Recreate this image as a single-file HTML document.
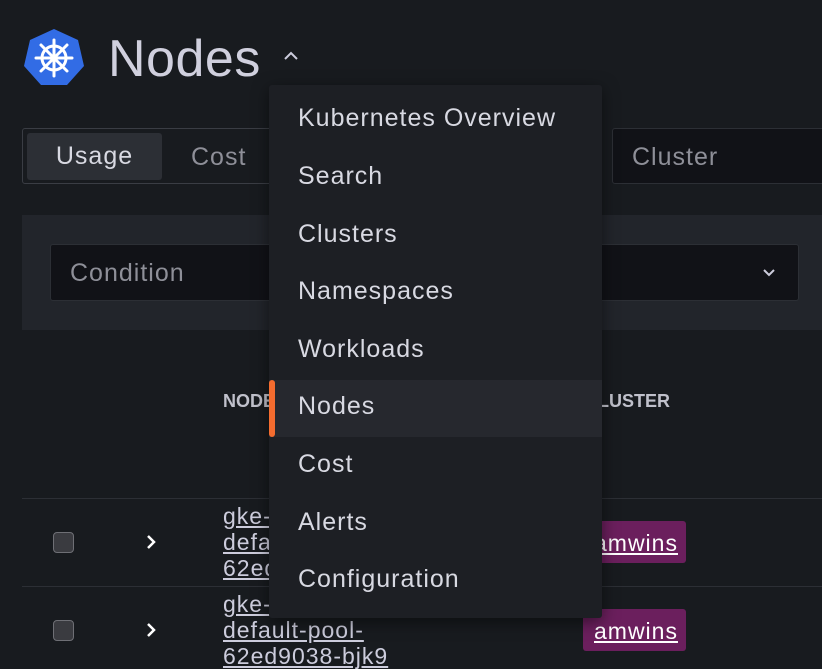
<!DOCTYPE html>
<html><head><style>
*{margin:0;padding:0;box-sizing:border-box}
body{width:822px;height:656px;overflow:hidden;background:#181b1f;font-family:"Liberation Sans",sans-serif;color:#ccccdc;position:relative}
.a{position:absolute}
.menu div.i{position:absolute;left:29px;font-size:25px;letter-spacing:1px;color:#d8d9e2;line-height:1}
.cell{font-size:23px;letter-spacing:1px;color:#ccccdc;text-decoration:underline;line-height:26px;white-space:nowrap}
</style></head><body>
<svg class="a" style="left:23px;top:28px" width="62" height="58" viewBox="0 0 62 58">
<polygon points="31,1 55,12 61,38 44,57 18,57 1,38 7,12" fill="#326ce5"/>
<g stroke="#fff" stroke-width="3" fill="none" stroke-linecap="round">
<circle cx="31" cy="30" r="12"/>
<line x1="31" y1="12" x2="31" y2="48"/><line x1="13" y1="30" x2="49" y2="30"/>
<line x1="18" y1="17" x2="44" y2="43"/><line x1="44" y1="17" x2="18" y2="43"/>
</g><circle cx="31" cy="30" r="3" fill="#fff"/></svg>
<div class="a" style="left:108px;top:29px;font-size:52px;letter-spacing:0.5px;color:#d0d0de">Nodes</div>
<svg class="a" style="left:283px;top:50px" width="16" height="12"><path d="M2 9 L8 3 L14 9" stroke="#ccccdc" stroke-width="2" fill="none"/></svg>
<div class="a" style="left:22px;top:128px;width:270px;height:56px;border:1px solid #3a3d44;border-radius:3px"></div>
<div class="a" style="left:27px;top:133px;width:135px;height:47px;background:#2c2f35;border-radius:3px;font-size:25px;letter-spacing:1px;color:#d8d9e2;text-align:center;line-height:47px">Usage</div>
<div class="a" style="left:191px;top:143px;font-size:25px;letter-spacing:1px;color:#8e8f98">Cost</div>
<div class="a" style="left:612px;top:128px;width:215px;height:56px;background:#111217;border:1px solid #2c2f35;border-radius:3px;font-size:25px;letter-spacing:1px;color:#8e8f98;padding:14px 19px">Cluster</div>
<div class="a" style="left:22px;top:215px;width:800px;height:115px;background:#22252b"></div>
<div class="a" style="left:50px;top:244px;width:749px;height:57px;background:#111217;border:1px solid #2c2f35;border-radius:3px;font-size:25px;letter-spacing:1px;color:#8e8f98;padding:14px 19px">Condition</div>
<svg class="a" style="left:762px;top:267px" width="14" height="12"><path d="M2 3 L7 8 L12 3" stroke="#ccccdc" stroke-width="2" fill="none"/></svg>
<div class="a" style="left:223px;top:391px;font-size:18px;font-weight:bold;color:#c0c1cb">NODE</div>
<div class="a" style="left:585px;top:391px;font-size:18px;font-weight:bold;color:#c0c1cb">CLUSTER</div>
<div class="a" style="left:22px;top:498px;width:800px;height:1px;background:#2c2f35"></div>
<div class="a" style="left:22px;top:586px;width:800px;height:1px;background:#2c2f35"></div>
<div class="a" style="left:53px;top:532px;width:21px;height:21px;background:#3a3b40;border:1px solid #6e6f75;border-radius:4px"></div>
<div class="a" style="left:53px;top:620px;width:21px;height:21px;background:#3a3b40;border:1px solid #6e6f75;border-radius:4px"></div>
<svg class="a" style="left:144px;top:534px" width="14" height="16"><path d="M4 2 L10 8 L4 14" stroke="#fff" stroke-width="2.5" fill="none"/></svg>
<svg class="a" style="left:144px;top:622px" width="14" height="16"><path d="M4 2 L10 8 L4 14" stroke="#fff" stroke-width="2.5" fill="none"/></svg>
<div class="a cell" style="left:223px;top:503px">gke-<br>default-pool-<br>62ed</div>
<div class="a cell" style="left:223px;top:591px">gke-<br>default-pool-<br>62ed9038-bjk9</div>
<div class="a" style="left:583px;top:521px;width:103px;height:42px;background:#6b1f5d;border-radius:3px"></div>
<div class="a cell" style="left:594px;top:530px;color:#fff">amwins</div>
<div class="a" style="left:583px;top:609px;width:103px;height:42px;background:#6b1f5d;border-radius:3px"></div>
<div class="a cell" style="left:594px;top:618px;color:#fff">amwins</div>
<div class="a menu" style="left:269px;top:85px;width:333px;height:533px;background:#1d1f24;border-radius:3px;box-shadow:0 4px 16px rgba(0,0,0,.5)">
<div class="a" style="left:0;top:295px;width:333px;height:57px;background:#26282e"></div>
<div class="a" style="left:0;top:295px;width:6px;height:57px;background:#f46c2f;border-radius:3px"></div>
<div class="i" style="top:21px">Kubernetes Overview</div>
<div class="i" style="top:79px">Search</div>
<div class="i" style="top:137px">Clusters</div>
<div class="i" style="top:194px">Namespaces</div>
<div class="i" style="top:252px">Workloads</div>
<div class="i" style="top:309px">Nodes</div>
<div class="i" style="top:367px">Cost</div>
<div class="i" style="top:425px">Alerts</div>
<div class="i" style="top:482px">Configuration</div>
</div>
</body></html>
